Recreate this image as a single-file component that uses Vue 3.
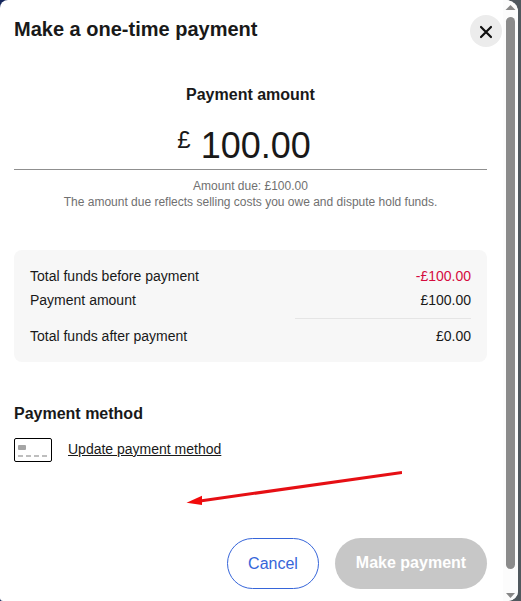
<script setup>
import { ref } from 'vue';

const amount = ref('100.00');
const rows = [
    { label: 'Total funds before payment', value: '-£100.00', negative: true },
    { label: 'Payment amount', value: '£100.00' },
    { label: 'Total funds after payment', value: '£0.00', total: true }
];
</script>
<template>
    <div class="backdrop">
        <div class="dialog">
            <div class="content">
                <header class="header">
                    <h2>Make a one-time payment</h2>
                    <button class="close" aria-label="Close">
                        <svg width="32" height="32" viewBox="0 0 32 32"><path fill="none" stroke="#111" stroke-width="2.2" stroke-linecap="round" d="m11 12l10 10m0-10l-10 10"/></svg>
                    </button>
                </header>
                <section class="amount">
                    <h3>Payment amount</h3>
                    <div class="amount-input">
                        <span class="currency">£</span>
                        <span class="value">{{ amount }}</span>
                    </div>
                    <p>Amount due: £100.00</p>
                    <p>The amount due reflects selling costs you owe and dispute hold funds.</p>
                </section>
                <section class="summary">
                    <div v-for="row in rows" :key="row.label" class="row" :class="{ total: row.total }">
                        <span>{{ row.label }}</span>
                        <span class="row-value" :class="{ negative: row.negative }">{{ row.value }}</span>
                    </div>
                </section>
                <section class="method">
                    <h3>Payment method</h3>
                    <div class="method-row">
                        <svg width="38" height="24" viewBox="0 0 38 24">
                            <rect x="0.5" y="0.5" width="37" height="23" rx="1.5" fill="#fff" stroke="#000"/>
                            <rect x="4" y="7" width="8" height="5" rx="1" fill="#a5a5a5"/>
                            <path stroke="#a9a9a9" stroke-width="1.5" stroke-dasharray="5 3" d="M4 18h30"/>
                        </svg>
                        <a class="link">Update payment method</a>
                    </div>
                </section>
                <footer class="footer">
                    <button class="btn cancel">Cancel</button>
                    <button class="btn primary" disabled>Make payment</button>
                </footer>
            </div>
            <div class="scrollbar">
                <svg width="15" height="17" viewBox="0 0 15 17"><path fill="#878787" d="M2.5 10h10l-5-5z"/></svg>
                <div class="thumb"></div>
                <svg width="15" height="32" viewBox="0 0 15 32"><path fill="#878787" d="M3 24h9l-4.5 5z"/></svg>
            </div>
        </div>
        <svg class="arrow" width="222" height="42" viewBox="0 0 222 42">
            <path stroke="#e60f14" stroke-width="3" d="M20 36L222 7.5"/>
            <path fill="#f20a0a" d="M6.5 37.7L22 30.7V40z"/>
        </svg>
    </div>
</template>
<style>
body {
    margin: 0;
    overflow: hidden;
}
</style>
<style scoped>
.backdrop {
    position: relative;
    height: 601px;
    background: linear-gradient(90deg, #14275c 0, #14275c 16px, #50585e 16px);
    font-family: "Liberation Sans", Arial, sans-serif;
    color: #191919;
}
.dialog {
    display: flex;
    width: 518px;
    height: 601px;
    overflow: hidden;
    border-radius: 8px 12px 10px 3px;
    background-color: #fff;
}
.content {
    width: 473px;
    padding: 15px 15px 0 14px;
}
h2, h3, p {
    margin: 0;
}
.header {
    display: flex;
    justify-content: space-between;
    margin-right: -15px;
}
h2 {
    font-size: 20px;
    line-height: 28px;
}
h3 {
    font-size: 16px;
    line-height: 24px;
}
.close {
    width: 32px;
    height: 32px;
    padding: 0;
    border: none;
    border-radius: 50%;
    background-color: #ececec;
}
.close svg {
    display: block;
}
.amount {
    margin-top: 36px;
    text-align: center;
}
.amount-input {
    display: flex;
    justify-content: center;
    height: 62px;
    border-bottom: 1px solid #8f8f8f;
    margin-bottom: 8px;
    padding-right: 13px;
}
.currency {
    margin-right: 10px;
    padding-top: 19px;
    font-size: 24px;
    line-height: 28px;
}
.value {
    padding-top: 18px;
    font-size: 36px;
    line-height: 42px;
}
.amount p {
    font-size: 12px;
    line-height: 16px;
    color: #707070;
}
.summary {
    height: 80px;
    margin-top: 40px;
    padding: 14px 16px 18px;
    border-radius: 8px;
    background-color: #f7f7f7;
    font-size: 14px;
    line-height: 24px;
}
.row {
    display: flex;
    justify-content: space-between;
}
.row-value {
    width: 176px;
    text-align: right;
}
.total {
    margin-top: 6px;
}
.total span {
    padding-top: 5px;
}
.total .row-value {
    border-top: 1px solid #e5e5e5;
}
.total span:first-child {
    padding-top: 6px;
}
.negative {
    color: #d50b3e;
}
.method {
    margin-top: 40px;
}
.method-row {
    display: flex;
    align-items: center;
    margin-top: 12px;
}
.link {
    margin-left: 16px;
    padding-bottom: 2px;
    font-size: 14px;
    line-height: 20px;
    text-decoration: underline;
}
.footer {
    display: flex;
    justify-content: flex-end;
    gap: 16px;
    margin-top: 76px;
}
.btn {
    height: 51px;
    padding: 0;
    border: none;
    border-radius: 26px;
    font-family: inherit;
    font-size: 16px;
}
.cancel {
    width: 92px;
    border: 1px solid #3665d9;
    background-color: #fff;
    color: #3665d9;
}
.primary {
    width: 152px;
    padding-bottom: 2px;
    background-color: #c7c7c7;
    color: #fff;
    font-weight: bold;
}
.scrollbar {
    display: flex;
    flex-direction: column;
    align-items: center;
    width: 15px;
    margin-left: 1px;
    background-color: #fcfcfc;
}
.thumb {
    width: 9px;
    flex: 1;
    border-radius: 5px;
    background-color: #8b8b8b;
}
.arrow {
    position: absolute;
    left: 180px;
    top: 465px;
}
</style>
